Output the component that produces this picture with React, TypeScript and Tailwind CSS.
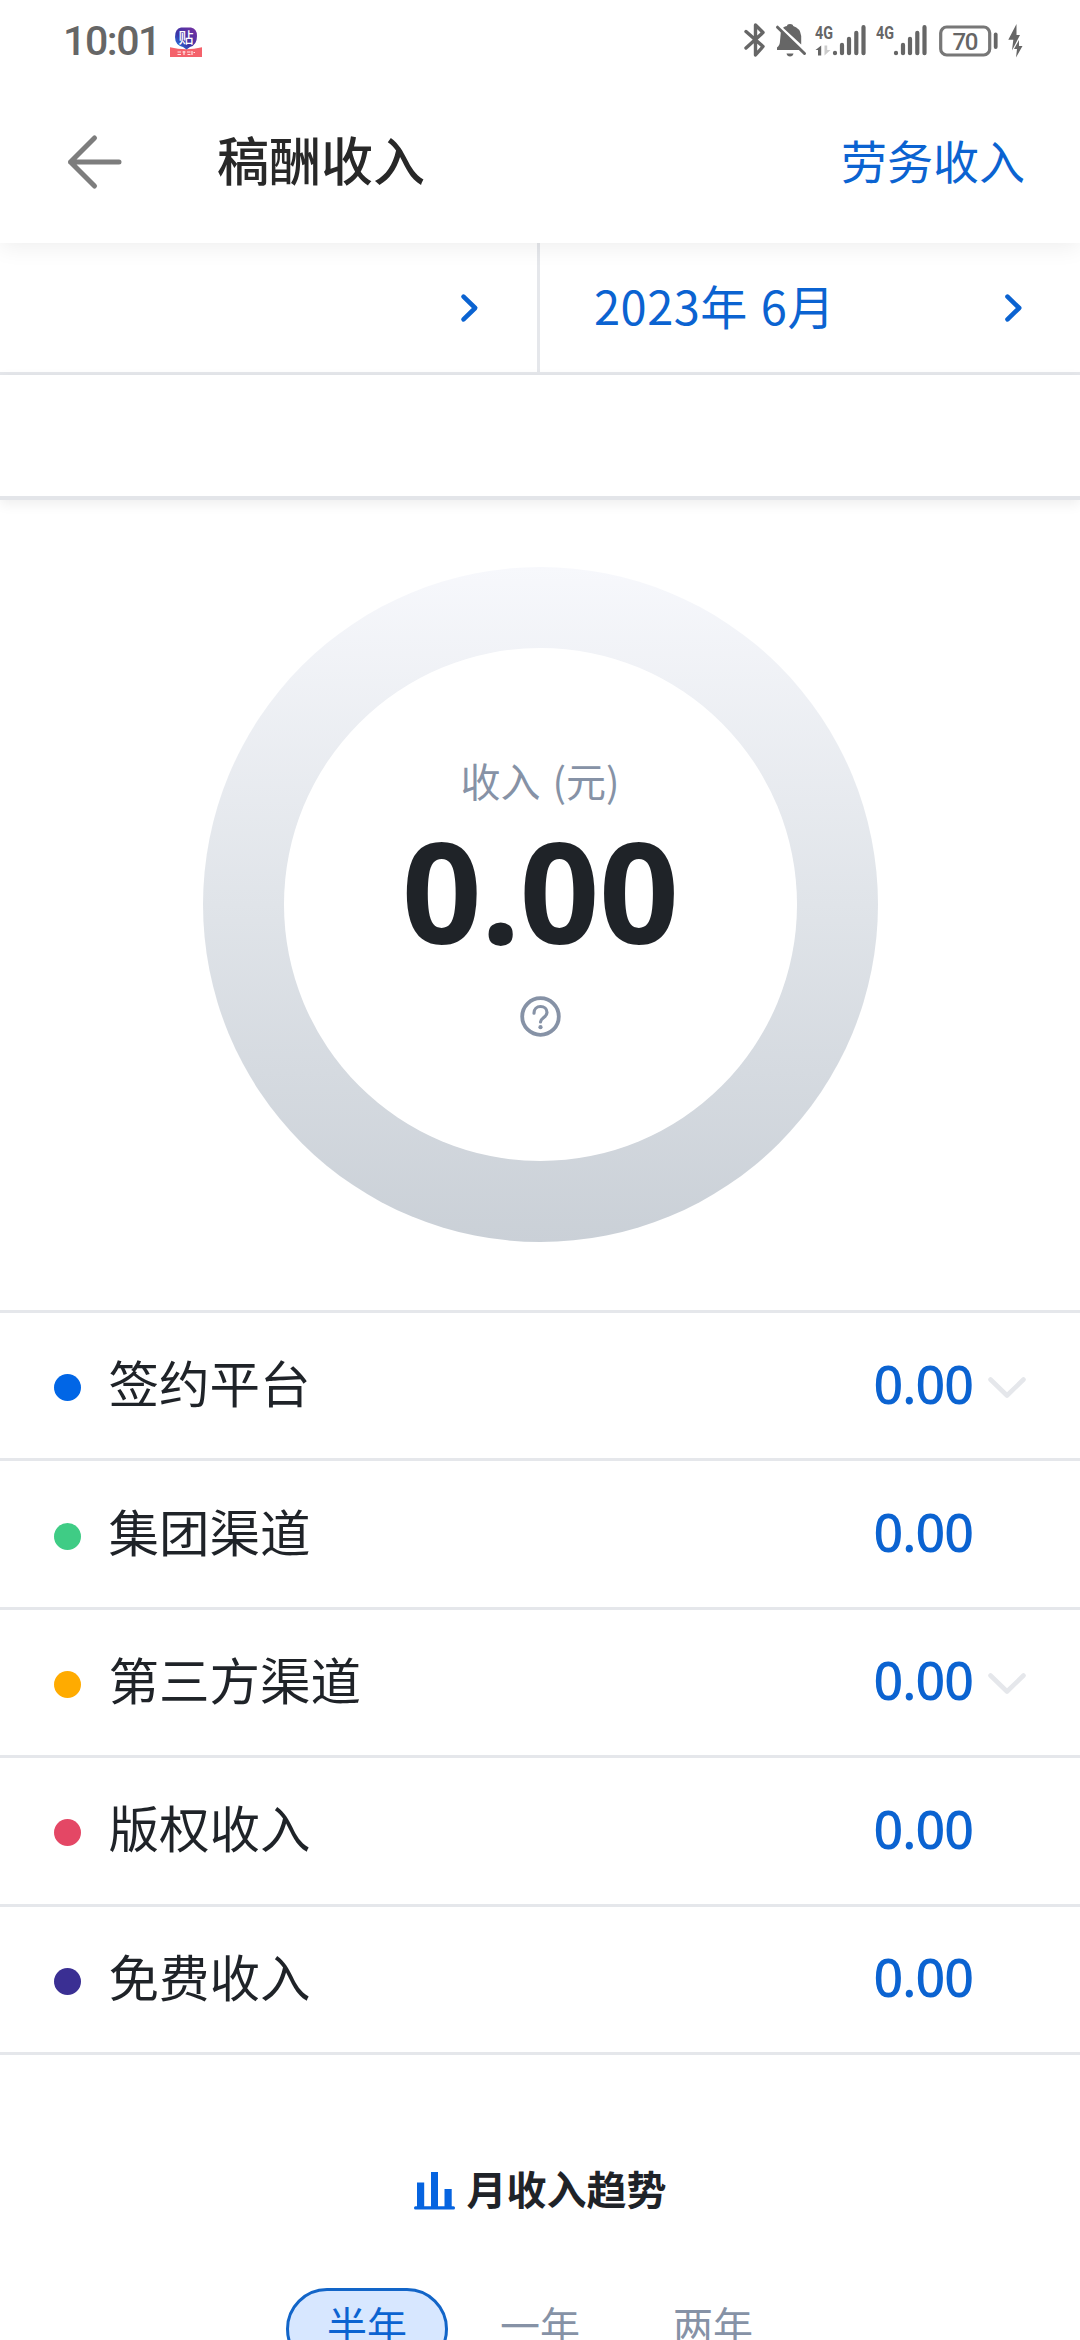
import clsx from "clsx";

const rows = [
  { label: "签约平台", value: "0.00", dot: "bg-[#0166e6]", expandable: true },
  { label: "集团渠道", value: "0.00", dot: "bg-[#3fcc85]", expandable: false },
  { label: "第三方渠道", value: "0.00", dot: "bg-[#ffab00]", expandable: true },
  { label: "版权收入", value: "0.00", dot: "bg-[#e44765]", expandable: false },
  { label: "免费收入", value: "0.00", dot: "bg-[#3a2f93]", expandable: false },
];

const ranges = ["半年", "一年", "两年"];

function Signal({ data }: { data?: boolean }) {
  return (
    <svg width="52" height="34" viewBox="0 0 52 34" stroke="#666" strokeLinecap="round">
      <text
        x="0"
        y="15.5"
        fontFamily="Roboto"
        fontSize="18"
        fontWeight="700"
        fill="#666"
        stroke="none"
        textLength="18"
        lengthAdjust="spacingAndGlyphs"
      >
        4G
      </text>
      {data && (
        <>
          <path d="M6.200 22.500v10H3v-5.500H.5z" fill="#666" stroke="none" />
          <path d="M9.500 22.500v10l6-5.500h-3.300v-4.500z" fill="#ccc" stroke="none" />
        </>
      )}
      <path d="M20 29.800v.4M27 21.800v8.400M34 15.800v14.400M41.300 9.800v20.400M48.500 4.200v26" strokeWidth="4.200" />
    </svg>
  );
}

function AppBadge() {
  return (
    <svg className="mt-[26px] ml-[14px]" width="34" height="32" viewBox="0 0 34 32">
      <defs>
        <linearGradient id="badge" x1="0" y1="1" x2="1" y2="0">
          <stop offset="0" stopColor="#1f8df5" />
          <stop offset="0.4" stopColor="#3a35a6" />
          <stop offset="1" stopColor="#7b2fa0" />
        </linearGradient>
      </defs>
      <path d="M1 21.300q8 2 16 2t16-2V31H1z" fill="#f4626b" />
      <path d="M12 1.500h10q6 1 6 8.500 0 9-7 11l-3.500 2.500L14 21Q6 19 6 11q0-8.500 6-9.500z" fill="url(#badge)" />
      <text x="17" y="16.500" textAnchor="middle" fontSize="15" fontWeight="500" fill="#fff">
        贴
      </text>
      <path d="M8.500 26h3.500M8.500 28.500h3.500M13.500 26h3M15 25v4M18 26h3.500M18.500 28.500h3M23 25v4M24.500 26.500h1.500" stroke="#ffe3e3" strokeWidth="1.200" />
    </svg>
  );
}

function StatusBar() {
  return (
    <div className="flex h-20 items-start justify-between pr-[57px] pl-[63px] text-[#666]">
      <div className="flex">
        <span className="mt-[17px] w-[92px] font-[Roboto] text-[41px] leading-[48px] font-medium tracking-[-1.400px]">10:01</span>
        <AppBadge />
      </div>
      <div className="flex h-8 items-start pt-[22.500px]">
        <svg width="24" height="34" viewBox="0 0 24 34" fill="none" stroke="#666" strokeWidth="3.4" strokeLinejoin="round" strokeLinecap="round">
          <path d="M3 8.500L20 23.500l-7.500 8.500V2L20 9.500 3 25" />
        </svg>
        <svg className="ml-[8px]" width="32" height="34" viewBox="0 0 32 34" fill="#666">
          <path d="M8 4.800q2-1.500 4-1.800 0-2 3-2t3.200 2q7 2 8 10v8.500z" />
          <path d="M6 7.500L25 27H2v-2.500q3-2.500 3-6.500z" />
          <path d="M11.500 30.500h7q-.6 3-3.500 3t-3.500-3z" />
          <path d="M2.500 4.200L29.500 30.500" stroke="#666" strokeWidth="3" strokeLinecap="round" />
        </svg>
        <div className="ml-[8px]">
          <Signal data />
        </div>
        <div className="ml-[9px]">
          <Signal />
        </div>
        <svg className="ml-[11px]" width="60" height="34" viewBox="0 0 60 34">
          <rect x="1.700" y="4" width="49" height="28" rx="6" fill="none" stroke="#777" strokeWidth="3.200" />
          <path d="M56.700 11.500v12.500" stroke="#666" strokeWidth="3.800" strokeLinecap="round" />
          <text x="26.500" y="26.500" textAnchor="middle" fontFamily="Roboto" fontSize="24" fontWeight="500" fill="#666" textLength="26" lengthAdjust="spacing">
            70
          </text>
        </svg>
        <svg className="ml-[9px]" width="15" height="35" viewBox="0 0 15 35" fill="#666">
          <path d="M8.500 1L.3 16.800h5L4 27.500l8-15.500H8.500z" />
          <path d="M11 17L6 26h3L8 34.500 14.500 23h-3.500z" />
        </svg>
      </div>
    </div>
  );
}

function ChevronRight() {
  return (
    <svg width="22" height="32" viewBox="0 0 22 32" fill="none" stroke="#0b63d1" strokeWidth="4.600" strokeLinecap="round" strokeLinejoin="round">
      <path d="M4.500 4.700L16.200 16 4.500 27.300" />
    </svg>
  );
}

function ChevronDown() {
  return (
    <svg width="40" height="24" viewBox="0 0 40 24" fill="none" stroke="#e5e7eb" strokeWidth="4.600" strokeLinecap="round" strokeLinejoin="round">
      <path d="M3.500 3.500L20 19.500 36.500 3.500" />
    </svg>
  );
}

export default function App() {
  return (
    <div className="flex h-[2340px] w-[1080px] flex-col overflow-hidden bg-white font-['Noto_Sans_CJK_SC',sans-serif] text-[#1f2328]">
      <header className="z-10 shrink-0 bg-white shadow-[0_4px_22px_rgba(0,0,0,0.07)]">
        <StatusBar />
        <div className="flex h-[163px] items-center pr-[55px] pl-[66px]">
          <svg width="58" height="58" viewBox="0 0 58 58" fill="none" stroke="#7d7d7d" strokeWidth="5" strokeLinecap="round" strokeLinejoin="round">
            <path d="M28.500 5L4.500 29l24 24M4.500 29H53" />
          </svg>
          <h1 className="mb-[6px] ml-[93px] text-[52px] leading-[52px] font-medium text-[#282828]">稿酬收入</h1>
          <span className="mb-[5px] ml-auto text-[46px] leading-[46px] text-[#0b63d1]">劳务收入</span>
        </div>
      </header>

      <div className="flex h-[132px] shrink-0 border-b-[3px] border-[#e5e7eb] text-[#0b63d1]">
        <div className="flex w-[540px] items-center justify-end border-r-[3px] border-[#e5e7eb] pr-[56px]">
          <ChevronRight />
        </div>
        <div className="flex flex-1 items-center justify-between pr-[55px] pl-[54px]">
          <span className="mb-[6px] text-[47px] leading-[48px] tracking-[0.500px] [word-spacing:2px]">2023年 6月</span>
          <ChevronRight />
        </div>
      </div>
      <div className="h-[125px] shrink-0 border-b-4 border-[#e3e5e9] shadow-[0_4px_12px_rgba(0,0,0,0.07)]" />

      <div className="flex h-[810px] shrink-0 justify-center pt-[67px]">
        <div className="size-[675px] rounded-full bg-linear-to-b from-[#f7f8fc] via-[#e0e4e9] to-[#cad0d7] p-[81px]">
          <div className="flex h-full flex-col items-center rounded-full bg-white pt-[112px]">
            <span className="text-[40px] leading-[40px] text-[#8692a6] [word-spacing:3px]">收入 (元)</span>
            <span className="mt-5 font-['Noto_Sans'] text-[140px] leading-[140px] font-bold tracking-[-0.800px]">0.00</span>
            <svg className="mt-[36px]" width="41" height="41" viewBox="0 0 41 41" fill="none" stroke="#8692a6" strokeLinecap="round">
              <circle cx="20.500" cy="20.500" r="18.300" strokeWidth="3.800" />
              <path d="M14 17.200c0-4 2.800-6.700 6.500-6.700s6.500 2.600 6.500 6c0 5-6.500 5.500-6.500 9.500" strokeWidth="3.200" />
              <circle cx="20.500" cy="31.200" r="2.100" fill="#8692a6" stroke="none" />
            </svg>
          </div>
        </div>
      </div>

      <ul className="shrink-0 border-t-[3px] border-[#e5e7eb]">
        {rows.map((row) => (
          <li key={row.label} className="flex h-[148.400px] items-center border-b-[3px] border-[#e5e7eb] pl-[54px]">
            <span className={clsx("mt-[4px] size-[27px] rounded-full", row.dot)} />
            <span className="mb-[9px] ml-[27.500px] text-[50.500px] leading-[52px]">{row.label}</span>
            <span className="mb-[4px] ml-auto font-['Noto_Sans'] text-[52px] leading-[52px] font-medium tracking-[-1px] text-[#0b63d1]">
              {row.value}
            </span>
            <span className="mr-[53px] ml-[14px] w-10 pt-[4px]">{row.expandable && <ChevronDown />}</span>
          </li>
        ))}
      </ul>

      <div className="mt-[112px] flex h-[44px] shrink-0 items-start justify-center">
        <svg className="mt-[5px] mr-[12px]" width="41" height="38" viewBox="0 0 41 38" fill="#0664e0">
          <path d="M3 10.500h7.200V35H3zM17 0h7v35h-7zM30.500 17h7.200V35h-7.200z" />
          <rect y="34.200" width="41" height="3.400" rx="1.500" />
        </svg>
        <h2 className="text-[40px] leading-[42px] font-bold">月收入趋势</h2>
      </div>

      <div className="mt-[77px] flex shrink-0 justify-center gap-[11px]">
        {ranges.map((range, i) => (
          <button
            key={range}
            className={clsx(
              "h-[82px] w-[162px] rounded-full border-[3px] pb-[9px] text-[40px] leading-[40px]",
              i === 0 ? "border-[#1265c8] bg-[#d7e7ff] text-[#0b63d1]" : "border-transparent text-[#8692a6]",
            )}
          >
            {range}
          </button>
        ))}
      </div>
    </div>
  );
}
